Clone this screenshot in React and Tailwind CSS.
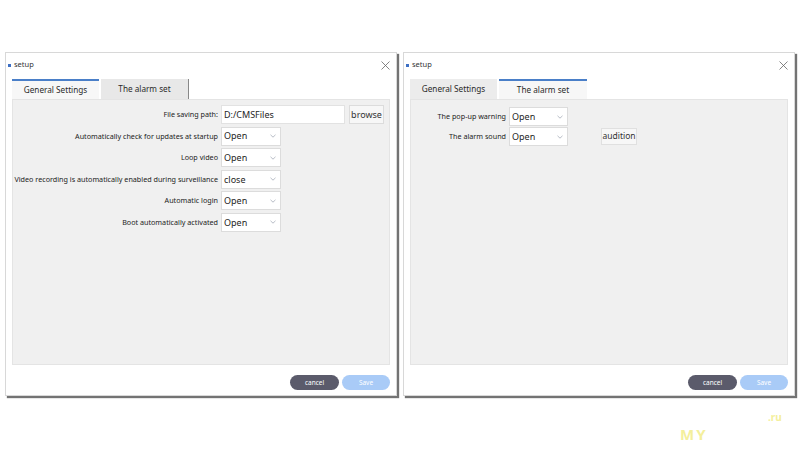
import React from 'react';

const font = { fontFamily: '"Noto Sans", "Open Sans", sans-serif' };

const Chevron = () => (
    <svg width="6" height="4" viewBox="0 0 6 4" className="text-gray-400">
        <path d="M0.5 0.8 L3 3.2 L5.5 0.8" fill="none" stroke="currentColor" strokeWidth="0.7" />
    </svg>
);

const Select = ({ value, w = 'w-[59px]' }) => (
    <div className={`${w} h-[19px] bg-white border border-[#dcdcdc] flex items-center justify-between pl-[2px] pr-[4px] text-[9px] text-[#1e1e1e]`}>
        <span>{value}</span>
        <Chevron />
    </div>
);

const Row = ({ label, labelW, children }) => (
    <div className="flex items-center h-[19px]">
        <div className={`${labelW} shrink-0 flex justify-end pr-[3px] text-[7.2px] text-[#222] whitespace-nowrap`}>{label}</div>
        {children}
    </div>
);

const Tabs = ({ active }) => (
    <div className="flex h-[20px] items-end text-[8.2px] text-[#2a2a2a]">
        <div className={`w-[87px] h-[20px] flex items-center justify-center ${active === 0 ? 'bg-[#f7f7f7] border-t-2 border-[#4a7fc8]' : 'bg-[#ececec]'}`}>
            General Settings
        </div>
        <div className={`w-[88px] h-[20px] ml-[2px] flex items-center justify-center ${active === 1 ? 'bg-[#f7f7f7] border-t-2 border-[#4a7fc8]' : 'bg-[#e8e8e8] border-r border-[#888]'}`}>
            The alarm set
        </div>
    </div>
);

const Window = ({ active, children }) => (
    <div className="w-[392px] h-[344px] bg-white border border-[#d8d8d8] shadow-[2px_2px_1px_rgba(0,0,0,0.55)] flex flex-col">
        <div className="h-[24px] flex items-center justify-between pl-[2px] pr-[6px]">
            <div className="flex items-center gap-[3px] text-[7.5px] text-[#333]">
                <span className="w-[3px] h-[3px] bg-[#3d6fc4]" />
                <span>setup</span>
            </div>
            <svg width="9" height="9" viewBox="0 0 9 9" className="text-[#666]">
                <path d="M0.5 0.5 L8.5 8.5 M8.5 0.5 L0.5 8.5" stroke="currentColor" strokeWidth="0.8" />
            </svg>
        </div>
        <div className="px-[6px] mt-[2px] flex flex-col flex-1">
            <Tabs active={active} />
            <div className="h-[266px] bg-[#f0f0f0] border border-[#e4e4e4] pt-[5px] flex flex-col gap-[2.6px]">
                {children}
            </div>
            <div className="flex justify-end gap-[3px] pt-[10px]">
                <button className="w-[49px] h-[15px] rounded-full bg-[#5b5b6b] text-white text-[6.5px]">cancel</button>
                <button className="w-[48px] h-[15px] rounded-full bg-[#a9cbf7] text-white text-[6.5px]">Save</button>
            </div>
        </div>
    </div>
);

export default function App() {
    return (
        <div className="relative w-[800px] h-[450px] bg-white overflow-hidden" style={font}>
            <div className="flex gap-[6px] pl-[5px] pt-[52px]">
                <Window active={0}>
                    <Row label="File saving path:" labelW="w-[208px]">
                        <div className="w-[124px] h-[19px] bg-white border border-[#e2e2e2] flex items-center pl-[2px] text-[9px] text-[#1e1e1e]">D:/CMSFiles</div>
                        <div className="ml-[4px] w-[35px] h-[19px] bg-[#f7f7f7] border border-[#dcdcdc] flex items-center justify-center text-[9px] text-[#333]">browse</div>
                    </Row>
                    <Row label="Automatically check for updates at startup" labelW="w-[208px]"><Select value="Open" w="w-[60px]" /></Row>
                    <Row label="Loop video" labelW="w-[208px]"><Select value="Open" w="w-[60px]" /></Row>
                    <Row label="Video recording is automatically enabled during surveillance" labelW="w-[208px]"><Select value="close" w="w-[60px]" /></Row>
                    <Row label="Automatic login" labelW="w-[208px]"><Select value="Open" w="w-[60px]" /></Row>
                    <Row label="Boot automatically activated" labelW="w-[208px]"><Select value="Open" w="w-[60px]" /></Row>
                </Window>
                <Window active={1}>
                    <div className="flex flex-col gap-[1px] pt-[2px]">
                        <Row label="The pop-up warning" labelW="w-[98px]"><Select value="Open" /></Row>
                        <Row label="The alarm sound" labelW="w-[98px]">
                            <Select value="Open" />
                            <div className="ml-[33px] w-[36px] h-[17px] bg-[#f7f7f7] border border-[#e0e0e0] flex items-center justify-center text-[8.5px] text-[#333]">audition</div>
                        </Row>
                    </div>
                </Window>
            </div>
            <div className="absolute left-[680px] top-[423px] text-[15px] font-bold text-[#f4ef9c] tracking-[2px]">MY</div>
            <div className="absolute left-[768px] top-[410px] text-[10px] font-bold text-[#f4ef9c]">.ru</div>
        </div>
    );
}
